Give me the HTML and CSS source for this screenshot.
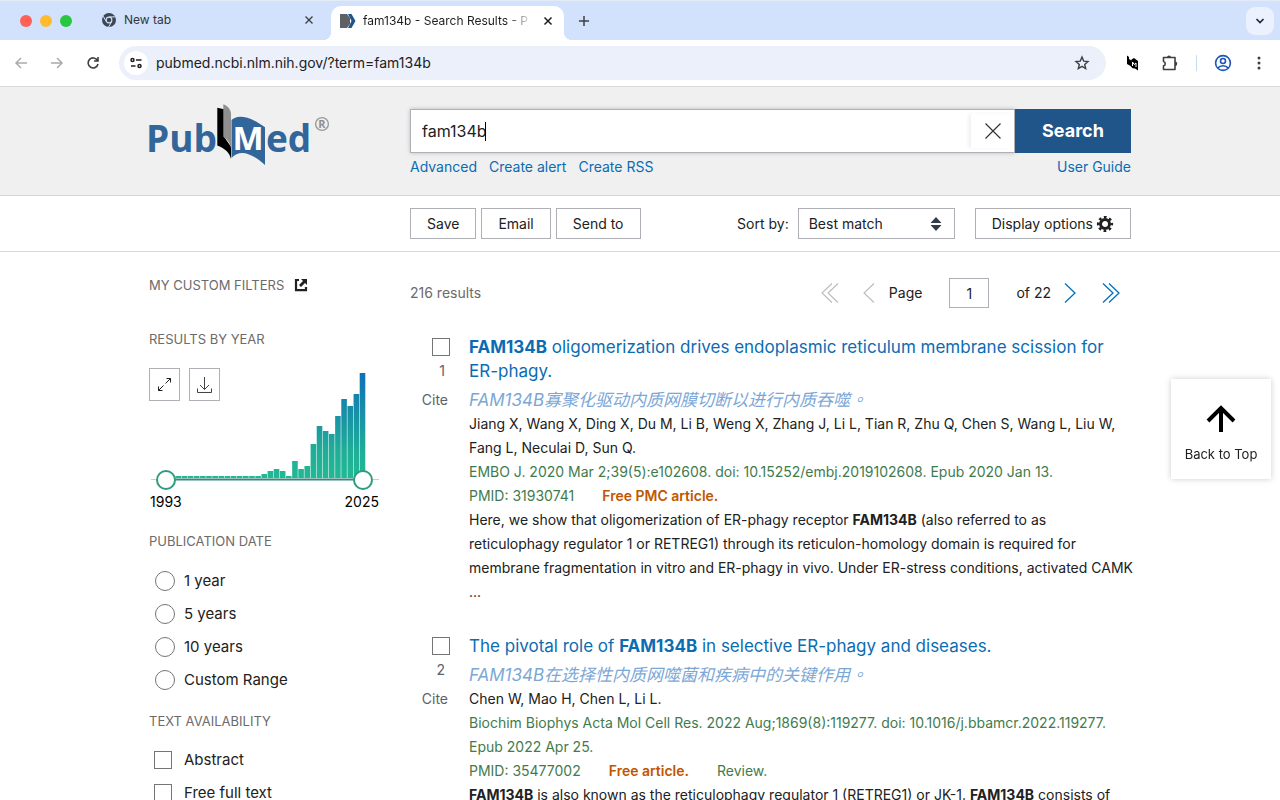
FILE: index.html
```html
<!DOCTYPE html>
<html lang="en">
<head>
<meta charset="utf-8">
<title>fam134b - Search Results - PubMed</title>
<link rel="stylesheet" href="styles.css">
</head>
<body>
<div class="tabstrip">
  <div class="lights"><span class="light red"></span><span class="light yellow"></span><span class="light green"></span></div>
  <div class="tab">
    <svg class="favicon" viewBox="0 0 16 16" width="16" height="16"><circle cx="8" cy="8" r="7" fill="#3c4654"/><circle cx="8" cy="8" r="3.4" fill="#d3e2fc"/><circle cx="8" cy="8" r="2.3" fill="#3c4654"/><path d="M8 4.9h6.3M5.3 9.6 2.2 4.2M10.7 9.6 7.6 15" stroke="#d3e2fc" stroke-width="1"/></svg>
    <span class="tab-title">New tab</span>
    <button class="icon-btn tab-close" aria-label="Close tab"><svg viewBox="0 0 10 10" width="10" height="10"><path d="M1.5 1.5l7 7M8.5 1.5l-7 7" stroke="#3c4043" stroke-width="1.4"/></svg></button>
  </div>
  <div class="tab active">
    <svg class="favicon" viewBox="0 0 16 16" width="16" height="16"><path d="M0 1h7l3 4v6l-3 4H0z" fill="#5f6265"/><path d="M8 1h3.500l4 7-4 7H8l3.500-7z" fill="#20558a"/></svg>
    <span class="tab-title fade">fam134b - Search Results - P</span>
    <button class="icon-btn tab-close" aria-label="Close tab"><svg viewBox="0 0 10 10" width="10" height="10"><path d="M1.500 1.500l7 7M8.500 1.500l-7 7" stroke="#1f1f1f" stroke-width="1.500"/></svg></button>
  </div>
  <button class="icon-btn new-tab" aria-label="New tab"><svg viewBox="0 0 12 12" width="12" height="12"><path d="M6 1v10M1 6h10" stroke="#3c4043" stroke-width="1.500"/></svg></button>
  <button class="tab-search" aria-label="Search tabs"><svg viewBox="0 0 10 10" width="10" height="10"><path d="M1.500 3L5 6.500 8.500 3" fill="none" stroke="#1f2a3a" stroke-width="1.700"/></svg></button>
</div>
<div class="toolbar">
  <div class="nav">
    <button class="icon-btn" aria-label="Back"><svg viewBox="0 0 16 16" width="16" height="16" fill="none" stroke="#a9abae" stroke-width="1.500"><path d="M14 8H3M8 3L3 8l5 5"/></svg></button>
    <button class="icon-btn" aria-label="Forward"><svg viewBox="0 0 16 16" width="16" height="16" fill="none" stroke="#a9abae" stroke-width="1.500"><path d="M2 8h11M8 3l5 5-5 5"/></svg></button>
    <button class="icon-btn" aria-label="Reload"><svg viewBox="0 0 16 16" width="16" height="16" fill="none" stroke="#3c4043" stroke-width="1.600"><path d="M12.500 5.500A5 5 0 1 0 13 9M13 2v4H9"/></svg></button>
  </div>
  <div class="omnibox">
    <button class="site-info" aria-label="Site information"><svg viewBox="0 0 14 14" width="14" height="14" fill="none" stroke="#1f1f1f" stroke-width="1.500"><circle cx="3.500" cy="4" r="1.500"/><path d="M7 4h5.500M2 10h4.500"/><circle cx="10.500" cy="10" r="1.500"/></svg></button>
    <input class="url" aria-label="Address" value="pubmed.ncbi.nlm.nih.gov/?term=fam134b">
    <button class="icon-btn" aria-label="Bookmark"><svg viewBox="0 0 16 16" width="16" height="16"><path d="M8 2l1.700 4.100 4.300.4-3.300 2.900 1 4.200L8 11.400l-3.700 2.200 1-4.200L2 6.500l4.300-.4z" fill="none" stroke="#3c4043" stroke-width="1.400"/></svg></button>
  </div>
  <div class="tools">
    <button class="icon-btn ext" aria-label="PubMed extension"><svg viewBox="0 0 16 18" width="16" height="18"><path d="M3 1.500l2 1.500v2l2.500 1.500V5.500L10 4l4 3v9.500l-3-2-2.500-.3L6.500 12 3 10z" fill="#000"/><path d="M8.500 12V8l1.700 2.500L12 9v4" stroke="#fff" fill="none" stroke-width="1"/></svg></button>
    <button class="icon-btn" aria-label="Extensions"><svg viewBox="0 0 18 18" width="18" height="18"><path d="M2.500 3.500H14v12H2.500v-3.700a2.200 2.200 0 0 0 0-4.300z" fill="none" stroke="#3c4043" stroke-width="1.600" stroke-linejoin="round"/><path d="M6 3.500a2 2 0 0 1 4 0zM14 7.500a2 2 0 0 1 0 4.500z" fill="#3c4043"/></svg></button>
    <span class="divider"></span>
    <button class="icon-btn" aria-label="Profile"><svg viewBox="0 0 18 18" width="18" height="18" fill="none" stroke="#1b55b5" stroke-width="1.600"><circle cx="9" cy="9" r="7.400"/><circle cx="9" cy="7" r="2.500"/><path d="M3.800 14c2.500-3 7.900-3 10.400 0"/></svg></button>
    <button class="icon-btn menu" aria-label="Menu"><svg viewBox="0 0 4 16" width="4" height="16" fill="#3c4043"><circle cx="2" cy="3" r="1.500"/><circle cx="2" cy="8" r="1.500"/><circle cx="2" cy="13" r="1.500"/></svg></button>
  </div>
</div>

<header class="site-header">
  <div class="container header-row">
    <a class="logo" href="#" aria-label="PubMed">
      <svg class="logo-mark" viewBox="0 0 184 64" width="184" height="64">
        <g class="logo-text" fill="#326599">
          <text x="-3" y="49" font-size="37">Pub</text>
          <path d="M82.500 17c5-5 16-5.500 33.500 7.300V62C106 53 92 44 82.500 55z"/>
          <path d="M68.300 4.700l6.700 1.500v27.500l7 10V56c-1.500-6-5-10-13.700-13.500z" fill="#000"/>
          <path d="M74.300 1.300c5 2 7.700 5.500 7.700 10V45c-1-5.500-4-9-7.700-11.300z" fill="#8f8f8f"/>
          <text x="99" y="47" font-size="33" text-anchor="middle" fill="#fff">M</text>
          <text x="117" y="49" font-size="37">ed</text>
        </g>
        <circle cx="173" cy="21" r="6.400" fill="none" stroke="#999" stroke-width="1.400"/>
        <text class="reg" x="173" y="25" font-size="11" text-anchor="middle" fill="#8f8f8f">R</text>
      </svg>
    </a>
    <form class="search">
      <div class="search-row">
        <div class="search-box">
          <input class="search-input" aria-label="Search term" value="fam134b">
          <span class="caret"></span>
          <button type="button" class="clear" aria-label="Clear search"><svg viewBox="0 0 16 16" width="16" height="16"><path d="M.5.5l15 15M15.500.5l-15 15" stroke="#333" stroke-width="1.200"/></svg></button>
        </div>
        <button type="button" class="search-btn">Search</button>
      </div>
      <nav class="search-links"><a href="#">Advanced</a><a href="#">Create alert</a><a href="#">Create RSS</a><a class="guide" href="#">User Guide</a></nav>
    </form>
  </div>
</header>

<div class="actions">
  <div class="container actions-row">
    <button class="btn">Save</button><button class="btn">Email</button><button class="btn">Send to</button>
    <label class="sort-label" for="sort">Sort by:</label>
    <div class="select-wrap">
      <select id="sort"><option>Best match</option></select>
      <svg class="select-arrows" viewBox="0 0 12 16" width="12" height="16" fill="#333c4a"><path d="M6 1l5.500 6H.5zM6 15L.5 9h11z"/></svg>
    </div>
    <button class="btn display">Display options
      <svg viewBox="0 0 18 18" width="18" height="18"><circle cx="9" cy="9" r="4.500" fill="none" stroke="#212121" stroke-width="3"/><circle cx="9" cy="9" r="6.800" fill="none" stroke="#212121" stroke-width="2.600" stroke-dasharray="2.670 2.670" stroke-dashoffset="1.330"/></svg>
    </button>
  </div>
</div>

<main class="container body-row">
  <aside class="sidebar">
    <h3 class="custom">MY CUSTOM FILTERS <svg viewBox="0 0 14 14" width="14" height="14"><path d="M5 2H2v10.200h10V9" fill="none" stroke="#212121" stroke-width="2.200"/><path d="M7 1h6v6l-2-2-4 4-2-2 4-4z" fill="#212121"/></svg></h3>
    <h3 class="by-year">RESULTS BY YEAR</h3>
    <div class="timeline">
      <svg class="chart" viewBox="0 0 230 118" width="230" height="118">
        <defs><linearGradient id="g" gradientUnits="userSpaceOnUse" x1="0" y1="4" x2="0" y2="110"><stop offset="0" stop-color="#0f70b8"/><stop offset=".75" stop-color="#20ae98"/><stop offset="1" stop-color="#22b894"/></linearGradient></defs>
        <path class="bars" fill="url(#g)"></path>
        <path d="M2 111.500h228" stroke="#ccc"/><path d="M17 111.500h196" stroke="#338a80" stroke-width="2"/>
      </svg>
      <input class="range" type="range" aria-label="From year" min="1993" max="2025" value="1993">
      <input class="range" type="range" aria-label="To year" min="1993" max="2025" value="2025">
      <div class="chart-btns">
        <button class="square" aria-label="Expand chart"><svg viewBox="0 0 15 15" width="15" height="15" fill="none" stroke="#212121"><path d="M8.500 6.500L13.500 1.500M9.500 1.500h4v4M6.500 8.500l-5 5M1.500 9.500v4h4"/></svg></button>
        <button class="square" aria-label="Download data"><svg viewBox="0 0 17 18" width="17" height="18" fill="none" stroke="#444"><path d="M8.500 1v12.500M4 9l4.500 4.500L13 9M1.500 12.500v4h14v-4"/></svg></button>
      </div>
      <div class="years"><span>1993</span><span>2025</span></div>
    </div>
    <h3 class="pubdate">PUBLICATION DATE</h3>
    <label class="opt"><input type="radio" name="d">1 year</label>
    <label class="opt"><input type="radio" name="d">5 years</label>
    <label class="opt"><input type="radio" name="d">10 years</label>
    <label class="opt"><input type="radio" name="d">Custom Range</label>
    <h3 class="avail">TEXT AVAILABILITY</h3>
    <label class="opt"><input type="checkbox">Abstract</label>
    <label class="opt"><input type="checkbox">Free full text</label>
  </aside>
  <section class="results">
    <div class="results-head">
      <span class="count">216 results</span>
      <div class="pager">
        <button class="icon-btn" aria-label="First page"><svg viewBox="0 0 18 20" width="18" height="20" fill="none" stroke="#bbb" stroke-width="1.100"><path d="M11 .5L1 10l10 9.500M17 .5L7 10l10 9.500"/></svg></button>
        <button class="icon-btn prev" aria-label="Previous page"><svg viewBox="0 0 12 20" width="12" height="20" fill="none" stroke="#bbb" stroke-width="1.100"><path d="M11 .5L1 10l10 9.500"/></svg></button>
        <label for="page">Page</label><input id="page" class="page-input" value="1"><span class="of">of 22</span>
        <button class="icon-btn next" aria-label="Next page"><svg viewBox="0 0 12 20" width="12" height="20" fill="none" stroke="#0071bc" stroke-width="1.300"><path d="M1 .5L11 10 1 19.500"/></svg></button>
        <button class="icon-btn last" aria-label="Last page"><svg viewBox="0 0 18 20" width="18" height="20" fill="none" stroke="#0071bc" stroke-width="1.300"><path d="M1 .5L11 10 1 19.500M7 .5L17 10 7 19.500"/></svg></button>
      </div>
    </div>
    <div class="result-list">
    <article class="result">
      <div class="side"><input type="checkbox" aria-label="Select result 1"><span class="num">1</span><button class="cite">Cite</button></div>
      <div class="doc">
        <a class="title" href="#"><b>FAM134B</b> oligomerization drives endoplasmic reticulum membrane scission for<br>ER-phagy.</a>
        <p class="zh" lang="zh">FAM134B寡聚化驱动内质网膜切断以进行内质吞噬<span lang="zh-TW">。</span></p>
        <p>Jiang X, Wang X, Ding X, Du M, Li B, Weng X, Zhang J, Li L, Tian R, Zhu Q, Chen S, Wang L, Liu W,<br>Fang L, Neculai D, Sun Q.</p>
        <p class="cit">EMBO J. 2020 Mar 2;39(5):e102608. doi: 10.15252/embj.2019102608. Epub 2020 Jan 13.</p>
        <p class="cit ids"><span>PMID: 31930741</span><b class="free">Free PMC article.</b></p>
        <p>Here, we show that oligomerization of ER-phagy receptor <b>FAM134B</b> (also referred to as<br>reticulophagy regulator 1 or RETREG1) through its reticulon-homology domain is required for<br>membrane fragmentation in vitro and ER-phagy in vivo. Under ER-stress conditions, activated CAMK<br>...</p>
      </div>
    </article>
    <article class="result">
      <div class="side"><input type="checkbox" aria-label="Select result 2"><span class="num">2</span><button class="cite">Cite</button></div>
      <div class="doc">
        <a class="title" href="#">The pivotal role of <b>FAM134B</b> in selective ER-phagy and diseases.</a>
        <p class="zh" lang="zh">FAM134B在选择性内质网噬菌和疾病中的关键作用<span lang="zh-TW">。</span></p>
        <p>Chen W, Mao H, Chen L, Li L.</p>
        <p class="cit">Biochim Biophys Acta Mol Cell Res. 2022 Aug;1869(8):119277. doi: 10.1016/j.bbamcr.2022.119277.<br>Epub 2022 Apr 25.</p>
        <p class="cit ids"><span>PMID: 35477002</span><b class="free">Free article.</b><span>Review.</span></p>
        <p><b>FAM134B</b> is also known as the reticulophagy regulator 1 (RETREG1) or JK-1. <b>FAM134B</b> consists of</p>
      </div>
    </article>
    </div>
  </section>
</main>
<button class="top-btn"><svg viewBox="0 0 30 28" width="30" height="28" fill="none" stroke="#000" stroke-width="4"><path d="M15 27V3M2 16L15 3l13 13"/></svg>Back to Top</button>
<script src="chart.js"></script>
</body>
</html>
```
FILE: chart.js
```js
// Bar heights per year, 1993 to 2025, in chart units.
const heights = [2, 2, 2, 2, 2, 2, 2, 2, 2, 2, 2, 2, 2, 2, 2, 2, 4, 7, 9, 7, 2, 17, 9, 12, 34, 52, 47, 44, 62, 79, 72, 84, 105];
const pitch = 196.5 / 32;
document.querySelector('.bars').setAttribute('d', heights.map((h, i) =>
  `M${14.2 + i * pitch} ${110 - h}h5.6v${h}h-5.6z`).join(''));
```
FILE: styles.css
```css
* { box-sizing: border-box; }
body { margin: 0; height: 100vh; overflow: hidden; background: #fff; color: #212121; font: 14px/24px Inter, "Noto Sans CJK SC", sans-serif; }
button, input, select { font: inherit; color: inherit; }
button { cursor: pointer; }
h3, p { margin: 0; }
a { color: #0b6cb3; text-decoration: none; }
svg { display: block; flex: none; }
.icon-btn { display: flex; padding: 0; border: 0; background: none; }

.tabstrip { display: flex; align-items: center; height: 40px; padding: 0 6px 0 20px; background: #d3e2fc; border-top: 1px solid #e3ebf9; font-size: 12px; }
.lights { display: flex; gap: 8px; width: 72px; }
.light { width: 12px; height: 12px; border-radius: 50%; }
.red { background: #fe5f57; }
.yellow { background: #febb2e; }
.green { background: #27c840; }
.tab { position: relative; display: flex; align-items: center; width: 239px; height: 34px; padding: 0 17px 2px 9px; color: #303740; }
.tab.active { align-self: flex-end; width: 233px; padding: 0 11px 5px 9px; background: #fff; border-radius: 10px 10px 0 0; color: #1f1f1f; }
.active::before, .active::after { content: ""; position: absolute; bottom: 0; width: 8px; height: 8px; }
.active::before { right: 100%; background: radial-gradient(circle at 0 0, transparent 8px, #fff 8px); }
.active::after { left: 100%; background: radial-gradient(circle at 100% 0, transparent 8px, #fff 8px); }
.favicon { margin-right: 7px; }
.tab-title { flex: 1; overflow: hidden; white-space: nowrap; }
.fade { mask-image: linear-gradient(to right, #000 85%, transparent); }
.tab-close { margin-left: 10px; }
.new-tab { margin-left: 14px; }
.tab-search { display: grid; place-items: center; width: 28px; height: 28px; margin-left: auto; padding: 0; border: 0; border-radius: 9px; background: #ebf1fd; }

.toolbar { display: flex; align-items: center; height: 47px; padding: 0 19px 0 13px; border-bottom: 1px solid #d9d9d9; }
.nav { display: flex; gap: 20px; width: 106px; }
.omnibox { display: flex; flex: 1; align-items: center; height: 34px; padding: 0 16px 0 5px; border-radius: 17px; background: #ebf0fa; }
.site-info { display: grid; place-items: center; width: 24px; height: 24px; padding: 0; border: 0; border-radius: 50%; background: #fff; }
.url { flex: 1; margin-left: 8px; padding: 0; border: 0; background: none; outline: 0; }
.tools { display: flex; align-items: center; gap: 17px; margin-left: 18px; }
.ext { margin-right: 4px; }
.divider { width: 1px; height: 16px; background: #c7d8f5; }
.menu { margin-left: 8px; }

.container { width: calc(100% - 298px); margin: 0 auto; }
.site-header { padding: 16px 0; background: #f0f0f0; border-bottom: 1px solid #d6d7d9; }
.header-row { display: flex; }
.logo { width: 261px; }
.logo-mark { overflow: visible; }
.logo-text { font-family: "Open Sans", sans-serif; font-weight: 700; }
.reg { font-family: "Open Sans", sans-serif; font-weight: 700; }
.search { flex: 1; padding-top: 6px; }
.search-row { display: flex; height: 44px; }
.search-box { position: relative; display: flex; flex: 1; border: 1px solid #aeb0b5; background: #fff; box-shadow: 0 0 4px #bbb; }
.search-input { flex: 1; padding: 0 11px; border: 0; outline: 0; background: none; font-size: 16px; }
.caret { position: absolute; left: 74px; top: 12px; width: 1px; height: 19px; background: #000; }
.clear { display: grid; place-items: center; width: 43px; margin: 4px 0; padding: 0; border: 0; background: #fff; box-shadow: -3px 0 3px #f3f3f3; }
.search-btn { position: relative; width: 116px; padding: 0; border: 0; background: #20558a; color: #fff; font-size: 18px; font-weight: 700; }
.search-links { display: flex; gap: 12px; padding-top: 2px; }
.guide { margin-left: auto; }

.actions { padding: 12px 0; border-bottom: 1px solid #d6d7d9; }
.actions-row { display: flex; align-items: center; padding-left: 261px; }
.btn { height: 31px; margin-right: 5px; padding: 0 16px; border: 1px solid #aeb0b5; background: #fff; white-space: nowrap; }
.sort-label { margin-left: auto; margin-right: 9px; }
.select-wrap { position: relative; width: 157px; height: 31px; margin-right: 20px; }
select { width: 100%; height: 100%; padding: 0 10px; border: 1px solid #aeb0b5; border-radius: 0; background: #fff; appearance: none; }
.select-arrows { position: absolute; right: 13px; top: 8px; pointer-events: none; }
.display { display: flex; align-items: center; gap: 3px; margin-right: 0; }

.body-row { display: flex; }
.sidebar { width: 261px; padding-top: 21px; }
h3 { color: #6b6b6b; font-size: 13px; font-weight: 400; line-height: 24px; }
.custom { display: flex; align-items: center; gap: 10px; }
.by-year { margin-top: 30px; }
.timeline { position: relative; width: 230px; margin-top: 17px; }
.chart-btns { position: absolute; left: 0; top: 0; display: flex; gap: 9px; }
.square { display: grid; place-items: center; width: 31px; height: 33px; padding: 0; border: 1px solid #aeb0b5; background: #fff; }
.range { position: absolute; left: 7px; top: 102px; width: 217px; height: 20px; margin: 0; background: none; appearance: none; pointer-events: none; }
.range::-webkit-slider-thumb { width: 20px; height: 20px; border: 2px solid #2f9c82; border-radius: 50%; background: #fff; appearance: none; pointer-events: auto; }
.years { display: flex; justify-content: space-between; padding: 4px 0 0 1px; color: #000; }
.pubdate { margin: 15px 0 11px; }
.avail { margin: 13px 0 10px; }
.opt { display: flex; align-items: center; height: 33px; padding-left: 5px; font-size: 15px; }
input[type=radio], input[type=checkbox] { flex: none; width: 20px; height: 20px; margin: 0 9px 0 1px; border: 1px solid #757575; background: #fff; appearance: none; }
input[type=radio] { border-radius: 50%; }
input[type=checkbox] { width: 18px; height: 18px; margin: 0 12px 0 0; }

.results { flex: 1; min-width: 0; padding-top: 25px; }
.results-head { display: flex; align-items: center; justify-content: space-between; height: 32px; }
.count { color: #6b6b6b; }
.pager { display: flex; align-items: center; padding-right: 11px; }
.prev { margin: 0 14px 0 24px; }
.page-input { width: 40px; height: 30px; margin: 0 27px; padding: 0; border: 1px solid #aeb0b5; text-align: center; }
.next { margin: 0 26px 0 13px; }
.result-list { display: grid; gap: 30px; margin-top: 26px; }
.result { display: flex; }
.side { display: flex; flex: none; flex-direction: column; align-items: flex-end; width: 40px; margin-right: 19px; padding-top: 3px; color: #5b616b; }
.side input[type=checkbox] { margin: 0; }
.num { padding: 3px 5px 0 0; }
.cite { height: 24px; margin-top: 5px; padding: 0 2px 0 0; border: 0; background: none; color: #5b616b; }
.doc { flex: 1; min-width: 0; white-space: nowrap; }
.title { display: block; font-size: 17px; line-height: 24px; }
.zh { padding: 5px 0 0; color: #7ba7d7; font-size: 17px; font-style: italic; line-height: 24px; }
.cit { color: #3f7b4d; }
.ids { display: flex; gap: 28px; }
.free { color: #c05600; font-weight: 600; }
.top-btn { position: fixed; right: 9px; top: 379px; display: flex; flex-direction: column; align-items: center; gap: 9px; width: 100px; height: 100px; padding: 26px 0 0; border: 0; background: #fff; box-shadow: 0 0 6px #ccc; font-size: 13px; }
```
